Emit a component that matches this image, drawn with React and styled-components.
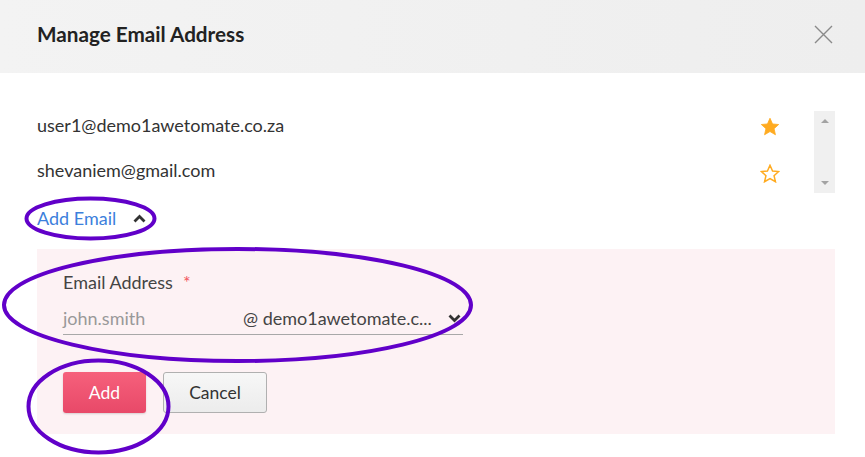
import React from "react";
import styled, { createGlobalStyle } from "styled-components";

const GlobalStyle = createGlobalStyle`
  html, body {
    margin: 0;
    padding: 0;
    background: #fff;
  }
  body {
    font-family: Lato, "Open Sans", sans-serif;
    color: #333;
  }
`;

const Modal = styled.div`
  position: relative;
  width: 865px;
  height: 457px;
  background: #fff;
  overflow: hidden;
`;

const Header = styled.header`
  height: 73px;
  display: flex;
  align-items: center;
  justify-content: space-between;
  padding: 0 31px 0 37px;
  background: linear-gradient(90deg, #f3f3f3 0%, #eeeeee 100%);
`;

const Title = styled.h2`
  margin: 0;
  margin-top: -5px;
  font-size: 20.7px;
  font-weight: 700;
  color: #222;
`;

const CloseButton = styled.button`
  width: 21px;
  height: 21px;
  padding: 0;
  margin-top: -4px;
  border: 0;
  background: transparent;
  display: flex;
  align-items: center;
  justify-content: center;
`;

const Body = styled.div`
  padding: 38px 30px 0 37px;
`;

const ListWrap = styled.div`
  display: flex;
  height: 82px;
`;

const List = styled.ul`
  flex: 1;
  margin: 0;
  padding: 0;
  list-style: none;
`;

const Row = styled.li`
  height: 45px;
  display: flex;
  align-items: flex-start;
  justify-content: space-between;
  padding-right: 34px;
  font-size: 18px;
  line-height: 28px;
  color: #333;
`;

const Star = styled.span`
  width: 20px;
  height: 28px;
  display: flex;
  align-items: center;
  justify-content: center;
  margin-top: ${(p) => (p.$filled ? "1px" : "3px")};
`;

const Scrollbar = styled.div`
  width: 21px;
  background: #f0f0f0;
  display: flex;
  flex-direction: column;
  justify-content: space-between;
  align-items: center;
  padding: 8px 0;
  box-sizing: border-box;
`;

const Arrow = styled.span`
  width: 0;
  height: 0;
  border-left: 4px solid transparent;
  border-right: 4px solid transparent;
  ${(p) =>
    p.$up
      ? "border-bottom: 4px solid #a3a3a3;"
      : "border-top: 4px solid #a3a3a3;"}
`;

const Toggle = styled.div`
  display: flex;
  align-items: center;
  gap: 17px;
  height: 28px;
  margin-top: 11px;
  color: #3c80dc;
  font-size: 18px;
`;

const Panel = styled.div`
  margin-top: 17px;
  height: 185px;
  background: #fdf2f4;
  padding: 22px 0 0 26px;
  box-sizing: border-box;
`;

const Label = styled.div`
  font-size: 18px;
  color: #444;
  line-height: 22px;
  display: flex;
  gap: 10px;
`;

const Required = styled.span`
  color: #f2555f;
`;

const InputRow = styled.div`
  width: 400px;
  margin-top: 9px;
  height: 32px;
  border-bottom: 1px solid #a8a8a8;
  display: flex;
  align-items: center;
  font-size: 18px;
`;

const Placeholder = styled.span`
  width: 180px;
  color: #999;
`;

const Domain = styled.span`
  flex: 1;
  display: flex;
  align-items: center;
  justify-content: space-between;
  color: #444;
  padding-right: 2px;
`;

const Actions = styled.div`
  display: flex;
  gap: 17px;
  margin-top: 37px;
`;

const Button = styled.button`
  height: 41px;
  width: ${(p) => p.$w}px;
  border-radius: 3px;
  font-family: Lato, sans-serif;
  font-size: 17.5px;
  cursor: pointer;
  ${(p) =>
    p.$primary
      ? `
    border: 0;
    color: #fff;
    background: linear-gradient(180deg, #f6607c 0%, #e84968 100%);
    box-shadow: 0 1px 2px rgba(0,0,0,0.15);
  `
      : `
    border: 1px solid #b0b0b0;
    color: #333;
    background: linear-gradient(180deg, #f7f7f7 0%, #ececec 100%);
  `}
`;

const Annotations = styled.svg`
  position: absolute;
  left: 0;
  top: 0;
  pointer-events: none;
`;

const StarIcon = ({ filled }) => (
  <svg width="20" height="19" viewBox="0 0 24 23">
    <path
      d="M12 1.5l3.1 6.9 7.4.7-5.6 5 1.7 7.4L12 17.6l-6.6 3.9 1.7-7.4-5.6-5 7.4-.7z"
      fill={filled ? "#ffab21" : "none"}
      stroke="#ffab21"
      strokeWidth={filled ? 1 : 1.8}
      strokeLinejoin="miter"
    />
  </svg>
);

const emails = [
  { address: "user1@demo1awetomate.co.za", primary: true },
  { address: "shevaniem@gmail.com", primary: false },
];

export default function App() {
  return (
    <>
      <GlobalStyle />
      <Modal>
        <Header>
          <Title>Manage Email Address</Title>
          <CloseButton aria-label="Close">
            <svg width="19" height="19" viewBox="0 0 19 19">
              <path d="M1 1L18 18M18 1L1 18" stroke="#8a8a8a" strokeWidth="1.4" />
            </svg>
          </CloseButton>
        </Header>
        <Body>
          <ListWrap>
            <List>
              {emails.map((e) => (
                <Row key={e.address}>
                  {e.address}
                  <Star $filled={e.primary}>
                    <StarIcon filled={e.primary} />
                  </Star>
                </Row>
              ))}
            </List>
            <Scrollbar>
              <Arrow $up />
              <Arrow />
            </Scrollbar>
          </ListWrap>
          <Toggle>
            Add Email
            <svg width="13" height="9" viewBox="0 0 13 9">
              <path d="M1.5 7.5L6.5 2.5L11.5 7.5" fill="none" stroke="#333" strokeWidth="2.8" />
            </svg>
          </Toggle>
          <Panel>
            <Label>
              Email Address <Required>*</Required>
            </Label>
            <InputRow>
              <Placeholder>john.smith</Placeholder>
              <Domain>
                @ demo1awetomate.c...
                <svg width="13" height="9" viewBox="0 0 13 9">
                  <path d="M1.5 1.5L6.5 6.5L11.5 1.5" fill="none" stroke="#333" strokeWidth="2.8" />
                </svg>
              </Domain>
            </InputRow>
            <Actions>
              <Button $primary $w={83}>Add</Button>
              <Button $w={104}>Cancel</Button>
            </Actions>
          </Panel>
        </Body>
        <Annotations width="865" height="457" viewBox="0 0 865 457">
          <g fill="none" stroke="#6100c9" strokeWidth="4">
            <ellipse cx="90.5" cy="218.5" rx="64" ry="20" />
            <ellipse cx="237.5" cy="305" rx="233.5" ry="56" />
            <ellipse cx="98.5" cy="406.5" rx="70" ry="46" />
          </g>
        </Annotations>
      </Modal>
    </>
  );
}
